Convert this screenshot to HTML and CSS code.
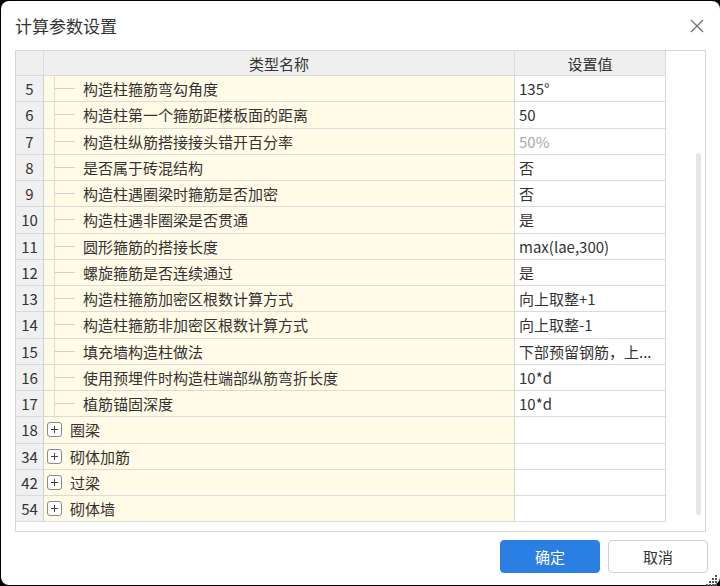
FILE: index.html
```html
<!DOCTYPE html>
<html lang="zh-CN">
<head>
<meta charset="utf-8">
<title>计算参数设置</title>
<link rel="stylesheet" href="styles.css">
</head>
<body>
<div class="dialog">
  <div class="titlebar">
    <span class="title">计算参数设置</span>
    <svg class="close" width="14" height="14" viewBox="0 0 14 14"><path d="M1 1 L13 13 M13 1 L1 13" stroke="#707070" stroke-width="1.3" fill="none"/></svg>
  </div>
  <div class="frame">
    <div class="grid">
      <div class="hcell"></div>
      <div class="hcell">类型名称</div>
      <div class="hcell">设置值</div>

      <div class="num">5</div><div class="name"><span class="tree"></span>构造柱箍筋弯勾角度</div><div class="val">135°</div>
      <div class="num">6</div><div class="name"><span class="tree"></span>构造柱第一个箍筋距楼板面的距离</div><div class="val">50</div>
      <div class="num">7</div><div class="name"><span class="tree"></span>构造柱纵筋搭接接头错开百分率</div><div class="val dim">50%</div>
      <div class="num">8</div><div class="name"><span class="tree"></span>是否属于砖混结构</div><div class="val">否</div>
      <div class="num">9</div><div class="name"><span class="tree"></span>构造柱遇圈梁时箍筋是否加密</div><div class="val">否</div>
      <div class="num">10</div><div class="name"><span class="tree"></span>构造柱遇非圈梁是否贯通</div><div class="val">是</div>
      <div class="num">11</div><div class="name"><span class="tree"></span>圆形箍筋的搭接长度</div><div class="val">max(lae,300)</div>
      <div class="num">12</div><div class="name"><span class="tree"></span>螺旋箍筋是否连续通过</div><div class="val">是</div>
      <div class="num">13</div><div class="name"><span class="tree"></span>构造柱箍筋加密区根数计算方式</div><div class="val">向上取整+1</div>
      <div class="num">14</div><div class="name"><span class="tree"></span>构造柱箍筋非加密区根数计算方式</div><div class="val">向上取整-1</div>
      <div class="num">15</div><div class="name"><span class="tree"></span>填充墙构造柱做法</div><div class="val">下部预留钢筋，上...</div>
      <div class="num">16</div><div class="name"><span class="tree"></span>使用预埋件时构造柱端部纵筋弯折长度</div><div class="val">10*d</div>
      <div class="num">17</div><div class="name"><span class="tree"></span>植筋锚固深度</div><div class="val">10*d</div>

      <div class="num">18</div><div class="name group"><span class="plus"></span>圈梁</div><div class="val"></div>
      <div class="num">34</div><div class="name group"><span class="plus"></span>砌体加筋</div><div class="val"></div>
      <div class="num">42</div><div class="name group"><span class="plus"></span>过梁</div><div class="val"></div>
      <div class="num">54</div><div class="name group"><span class="plus"></span>砌体墙</div><div class="val"></div>
    </div>
    <div class="track"><div class="thumb"></div></div>
  </div>
  <div class="footer">
    <button class="btn primary">确定</button>
    <button class="btn">取消</button>
  </div>
  <svg class="grip" width="12" height="12" viewBox="0 0 12 12">
    <g fill="#555"><rect x="9" y="1" width="2" height="2"/><rect x="6" y="4" width="2" height="2"/><rect x="9" y="4" width="2" height="2"/><rect x="3" y="7" width="2" height="2"/><rect x="6" y="7" width="2" height="2"/><rect x="9" y="7" width="2" height="2"/><rect x="0" y="10" width="2" height="2"/><rect x="3" y="10" width="2" height="2"/><rect x="6" y="10" width="2" height="2"/><rect x="9" y="10" width="2" height="2"/></g>
  </svg>
</div>
</body>
</html>
```
FILE: styles.css
```css
* { box-sizing: border-box; }
html, body { margin: 0; padding: 0; }
body {
  background: #000;
  width: 720px;
  height: 586px;
  overflow: hidden;
  font-family: "Noto Sans", "Noto Sans CJK SC", sans-serif;
  color: #333;
}
.dialog {
  position: relative;
  margin: 1px 0 0 1px;
  width: 719px;
  height: 584px;
  background: #fff;
  border-radius: 8px;
  display: flex;
  flex-direction: column;
}
.titlebar {
  height: 49px;
  display: flex;
  align-items: center;
  justify-content: space-between;
  padding: 0 16px 0 14px;
}
.title {
  font-size: 17px;
  color: #333;
  font-family: "Noto Sans CJK SC", sans-serif;
}
.close { display: block; margin-top: 1px; }
.frame {
  margin: 0 14px 0 14px;
  height: 482px;
  border: 1px solid #d6d6d6;
  display: flex;
}
.grid {
  display: grid;
  grid-template-columns: 28px 471px 151px;
  grid-template-rows: 25px repeat(17, 26.25px);
  align-content: start;
  font-size: 15px;
}
.grid > div {
  border-right: 1px solid #dadada;
  border-bottom: 1px solid #dadada;
  display: flex;
  align-items: center;
  white-space: nowrap;
  font-family: "Noto Sans CJK SC", sans-serif;
}
.hcell {
  background: #efefef;
  justify-content: center;
  color: #333;
}
.num {
  background: #f0f0f0;
  justify-content: center;
  border-right-color: #cfcfcf !important;
}
.name {
  background: #fffbe6;
  padding-left: 10px;
}
.tree {
  align-self: stretch;
  width: 22px;
  margin-right: 7px;
  border-left: 1px solid #e2dcc4;
  position: relative;
  display: flex;
  align-items: center;
}
.tree::after {
  content: "";
  display: block;
  width: 20px;
  height: 1px;
  background: #d2d2d2;
}
.name.group { padding-left: 3px; }
.plus {
  width: 15px;
  height: 15px;
  border: 1px solid #8a8a8a;
  border-radius: 3px;
  margin-right: 8px;
  background: #fff;
  position: relative;
}
.plus::before, .plus::after {
  content: "";
  position: absolute;
  background: #444;
}
.plus::before { left: 3px; top: 6px; width: 7px; height: 1px; }
.plus::after { left: 6px; top: 3px; width: 1px; height: 7px; }
.val {
  background: #fff;
  padding-left: 4px;
}
.val.dim { color: #a8a8a8; }
.track {
  flex: 1;
  display: flex;
  justify-content: flex-end;
  padding: 102px 4px 0 0;
}
.thumb {
  width: 5px;
  height: 362px;
  background: #e6e6e6;
  border-radius: 3px;
}
.footer {
  display: flex;
  justify-content: flex-end;
  gap: 8px;
  padding: 8px 12px 0 0;
}
.btn {
  width: 100px;
  height: 33px;
  border: 1px solid #cfcfcf;
  border-radius: 4px;
  background: #fff;
  color: #333;
  font-size: 15px;
  font-family: "Noto Sans CJK SC", sans-serif;
  padding: 0;
}
.btn.primary {
  background: #2b7fe3;
  border-color: #2b7fe3;
  color: #fff;
}
.grip {
  position: absolute;
  right: 2px;
  bottom: -1px;
}
```
